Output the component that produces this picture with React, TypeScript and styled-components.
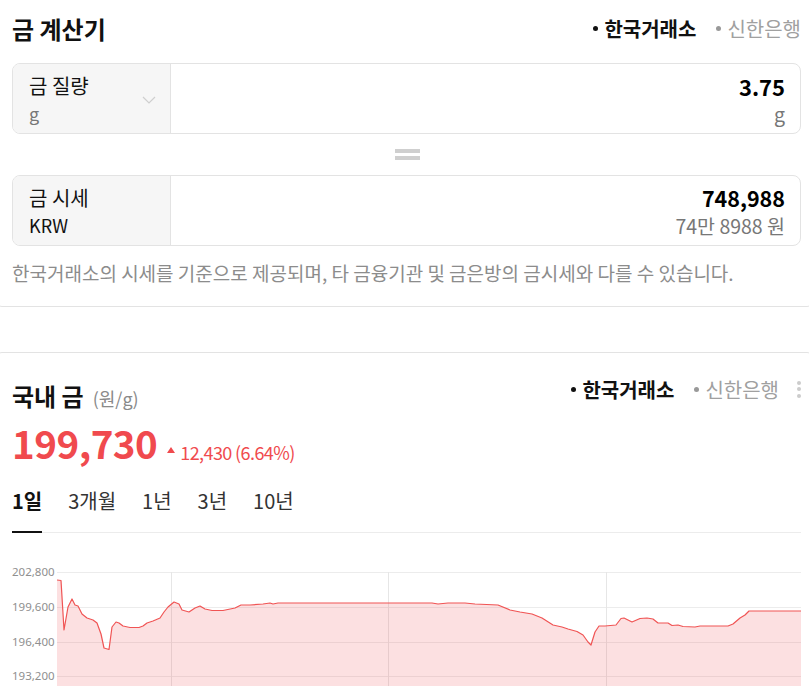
import React from "react";
import styled, { createGlobalStyle } from "styled-components";

const RED = "#f04a4e";

const Global = createGlobalStyle`
  html, body { margin: 0; padding: 0; background: #fff; }
  body { font-family: "Noto Sans CJK KR", "Noto Sans", sans-serif; color: #111; }
  * { box-sizing: border-box; }
`;

const Page = styled.div`
  width: 809px;
  height: 686px;
  overflow: hidden;
  display: flex;
  flex-direction: column;
  gap: 45px;
`;

const Card = styled.section<{ $top?: boolean }>`
  margin: ${(p) => (p.$top ? "-11px" : "0")} -4px 0 -4px;
  padding: ${(p) => (p.$top ? "10px" : "0")} 11px ${(p) => (p.$top ? "20px" : "0")} 15px;
  border: 1px solid #e3e3e3;
  border-radius: 6px;
  background: #fff;
`;

const Header = styled.div<{ $h: number }>`
  height: ${(p) => p.$h}px;
  display: flex;
  align-items: center;
  justify-content: space-between;
`;

const Title = styled.h1`
  margin: 0;
  font-size: 24px;
  font-weight: 700;
  color: #111;
`;

const SubTitle = styled.h2`
  margin: 0;
  padding-top: 12px;
  font-size: 24px;
  font-weight: 700;
  color: #111;
  display: flex;
  align-items: baseline;
  gap: 9px;
  span {
    font-size: 18px;
    font-weight: 400;
    color: #8a8a8a;
  }
`;

const Sources = styled.div`
  display: flex;
  align-items: center;
  gap: 20px;
`;

const Source = styled.span<{ $active?: boolean }>`
  display: inline-flex;
  align-items: center;
  font-size: 20px;
  font-weight: ${(p) => (p.$active ? 700 : 400)};
  color: ${(p) => (p.$active ? "#111" : "#a0a0a0")};
  &::before {
    content: "";
    width: 5px;
    height: 5px;
    border-radius: 50%;
    background: ${(p) => (p.$active ? "#111" : "#999")};
    margin-right: 6px;
  }
`;

const Dots = styled.span`
  display: inline-flex;
  flex-direction: column;
  gap: 2.5px;
  margin-left: -2px;
  i {
    width: 4px;
    height: 4px;
    border-radius: 50%;
    background: #ccc;
  }
`;

const Box = styled.div`
  display: grid;
  grid-template-columns: 158px 1fr;
  height: 71px;
  border: 1px solid #e3e3e3;
  border-radius: 8px;
  overflow: hidden;
`;

const BoxLabel = styled.div`
  position: relative;
  background: #f6f6f6;
  border-right: 1px solid #e3e3e3;
  padding: 9px 16px 0;
  display: flex;
  flex-direction: column;
`;

const LabelMain = styled.div`
  font-size: 20px;
  line-height: 26px;
  color: #111;
`;

const LabelSub = styled.div<{ $dark?: boolean }>`
  font-size: 18px;
  line-height: 28px;
  color: ${(p) => (p.$dark ? "#111" : "#777")};
`;

const Chevron = styled.svg`
  position: absolute;
  right: 14px;
  top: 32px;
`;

const BoxValue = styled.div`
  padding: 8px 15px 0;
  display: flex;
  flex-direction: column;
  align-items: flex-end;
`;

const ValueMain = styled.div<{ $size: number }>`
  font-size: ${(p) => p.$size}px;
  line-height: 28px;
  font-weight: 700;
  color: #000;
`;

const ValueSub = styled.div`
  font-size: 19.5px;
  line-height: 27px;
  color: #777;
`;

const Equals = styled.div`
  height: 41px;
  display: flex;
  flex-direction: column;
  align-items: center;
  justify-content: center;
  gap: 3px;
  padding-left: 1px;
  i {
    width: 25px;
    height: 4px;
    background: #cfcfcf;
  }
`;

const Note = styled.p`
  margin: 13px 0 0;
  font-size: 19px;
  line-height: 27px;
  color: #8c8c8c;
  white-space: nowrap;
`;

const PriceRow = styled.div`
  display: flex;
  align-items: baseline;
  gap: 10px;
  height: 40px;
  margin-top: -3px;
`;

const Price = styled.div`
  font-size: 38.5px;
  font-weight: 700;
  color: ${RED};
  letter-spacing: -0.5px;
  line-height: 40px;
`;

const Change = styled.div`
  display: flex;
  align-items: center;
  font-size: 18px;
  color: ${RED};
  letter-spacing: -0.6px;
  position: relative;
  top: -4px;
  &::before {
    content: "";
    border-left: 4.5px solid transparent;
    border-right: 4.5px solid transparent;
    border-bottom: 6px solid ${RED};
    margin-right: 5px;
    position: relative;
    top: -2px;
  }
`;

const Tabs = styled.div`
  margin-top: 25px;
  display: flex;
  gap: 26px;
  border-bottom: 1px solid #ececec;
`;

const Tab = styled.div<{ $active?: boolean }>`
  font-size: 20px;
  line-height: 28px;
  padding-bottom: 16px;
  color: ${(p) => (p.$active ? "#111" : "#333")};
  font-weight: ${(p) => (p.$active ? 700 : 400)};
  border-bottom: 2px solid ${(p) => (p.$active ? "#111" : "transparent")};
  margin-bottom: -1px;
`;

const ChartSvg = styled.svg`
  display: block;
  margin-top: 14px;
`;

const pts: [number, number][] = [
  [57, 581], [61, 581.5], [64, 631], [68, 608], [72, 600], [75, 606], [78, 607], [82, 615],
  [87, 619], [93, 621], [97, 624], [101, 635], [104, 649], [109, 650.5], [112, 628],
  [116, 623], [119, 624], [123, 627], [130, 628.5], [139, 628.5], [143, 627], [147, 624],
  [153, 622], [160, 619], [164, 613], [168, 608], [174, 603], [179, 605], [182, 611],
  [189, 613], [195, 609], [200, 607], [205, 610], [212, 611.5], [223, 611.5], [235, 609],
  [241, 606], [250, 606], [263, 605], [270, 604], [273, 605], [278, 604], [432, 604],
  [438, 605], [448, 604], [465, 604], [475, 605], [498, 606], [510, 611], [520, 613],
  [532, 615], [542, 619], [553, 626], [562, 628], [568, 630], [577, 632.5], [583, 636],
  [588, 643], [591, 646], [595, 633], [599, 627], [605, 627], [616, 626], [621, 619.5],
  [624, 619], [632, 623], [640, 619.5], [647, 619], [653, 620], [658, 624], [668, 624],
  [672, 626.5], [678, 626], [683, 627.5], [695, 628], [700, 627], [728, 627], [733, 625],
  [740, 619], [745, 616], [749, 612], [801, 612],
];

const Chart: React.FC = () => {
  const line = pts.map((p) => p.join(",")).join(" ");
  const area = `57,700 ${line} 801,700`;
  const hLines = [573, 608, 643, 677];
  const labels = ["202,800", "199,600", "196,400", "193,200"];
  return (
    <ChartSvg width={789} height={140} viewBox="12 548 789 140">
      {hLines.map((y) => (
        <line key={y} x1={57} x2={801} y1={y + 0.5} y2={y + 0.5} stroke="#ececec" strokeWidth={1} />
      ))}
      {[171.5, 388.5, 606.5].map((x) => (
        <line key={x} x1={x} x2={x} y1={573} y2={700} stroke="#e6e6e6" strokeWidth={1} />
      ))}
      <polygon points={area} fill="rgba(240,74,78,0.17)" />
      <polyline points={line} fill="none" stroke="#f05454" strokeWidth={1.2} strokeLinejoin="round" />
      {hLines.map((y, i) => (
        <text
          key={y}
          x={12}
          y={y + 1}
          dominantBaseline="middle"
          fontSize={11.5}
          fill="#8f8f8f"
          fontFamily='"Noto Sans", sans-serif'
        >
          {labels[i]}
        </text>
      ))}
    </ChartSvg>
  );
};

export default function App() {
  return (
    <>
      <Global />
      <Page>
        <Card $top>
          <Header $h={56}>
            <Title>금 계산기</Title>
            <Sources>
              <Source $active>한국거래소</Source>
              <Source>신한은행</Source>
            </Sources>
          </Header>
          <div style={{ height: 7 }} />
          <Box>
            <BoxLabel>
              <LabelMain>금 질량</LabelMain>
              <LabelSub>g</LabelSub>
              <Chevron width="14" height="8" viewBox="0 0 14 8">
                <path d="M1 1 L7 7 L13 1" fill="none" stroke="#cfcfcf" strokeWidth="1.2" />
              </Chevron>
            </BoxLabel>
            <BoxValue>
              <ValueMain $size={22}>3.75</ValueMain>
              <ValueSub>g</ValueSub>
            </BoxValue>
          </Box>
          <Equals>
            <i />
            <i />
          </Equals>
          <Box>
            <BoxLabel>
              <LabelMain>금 시세</LabelMain>
              <LabelSub $dark>KRW</LabelSub>
            </BoxLabel>
            <BoxValue>
              <ValueMain $size={21.5}>748,988</ValueMain>
              <ValueSub>74만 8988 원</ValueSub>
            </BoxValue>
          </Box>
          <Note>한국거래소의 시세를 기준으로 제공되며, 타 금융기관 및 금은방의 금시세와 다를 수 있습니다.</Note>
        </Card>
        <Card>
          <Header $h={72}>
            <SubTitle>
              국내 금<span>(원/g)</span>
            </SubTitle>
            <Sources>
              <Source $active>한국거래소</Source>
              <Source>신한은행</Source>
              <Dots>
                <i />
                <i />
                <i />
              </Dots>
            </Sources>
          </Header>
          <PriceRow>
            <Price>199,730</Price>
            <Change>12,430 (6.64%)</Change>
          </PriceRow>
          <Tabs>
            <Tab $active>1일</Tab>
            <Tab>3개월</Tab>
            <Tab>1년</Tab>
            <Tab>3년</Tab>
            <Tab>10년</Tab>
          </Tabs>
          <Chart />
        </Card>
      </Page>
    </>
  );
}
